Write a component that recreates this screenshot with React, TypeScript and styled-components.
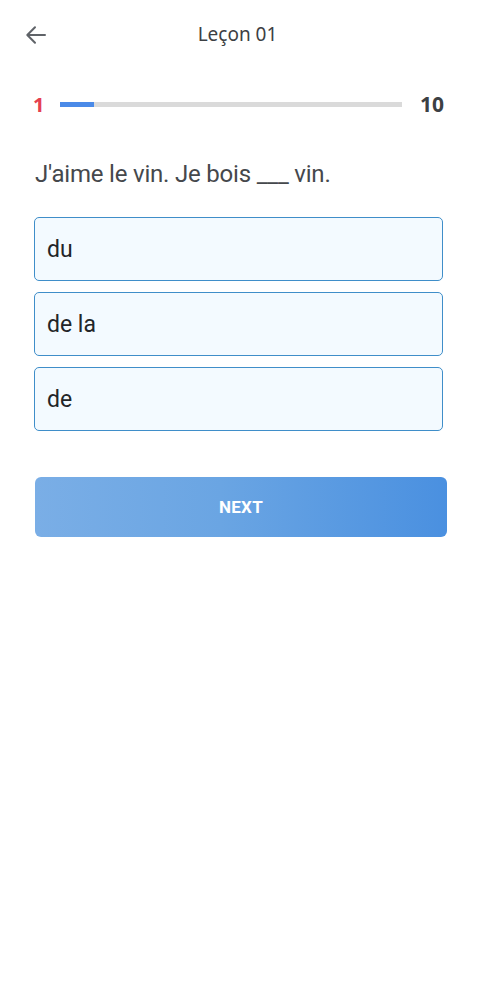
import React, { useState } from "react";
import styled, { createGlobalStyle } from "styled-components";

const GlobalStyle = createGlobalStyle`
  html, body {
    margin: 0;
    padding: 0;
    background: #ffffff;
  }
  body {
    font-family: Roboto, "Noto Sans", "Liberation Sans", sans-serif;
  }
`;

const Screen = styled.div`
  width: 477px;
  min-height: 1000px;
  background: #fff;
  box-sizing: border-box;
`;

const TopBar = styled.header`
  height: 70px;
  display: grid;
  grid-template-columns: 70px 1fr 70px;
  align-items: center;
`;

const BackButton = styled.button`
  border: 0;
  background: none;
  padding: 0;
  margin-left: 23px;
  width: 26px;
  height: 26px;
  display: flex;
  align-items: center;
  justify-content: center;
  cursor: pointer;
  color: #5f6368;
`;

const Title = styled.h1`
  margin: 0 0 2px 0;
  text-align: center;
  font-family: "Noto Sans", sans-serif;
  font-size: 19px;
  font-weight: 400;
  color: #3c4043;
  padding-right: 2px;
`;

const ProgressRow = styled.div`
  display: flex;
  align-items: center;
  padding: 22px 33px 0 33px;
  height: 24px;
`;

const Step = styled.span<{ current?: boolean }>`
  font-family: "Noto Sans", sans-serif;
  font-size: ${(p) => (p.current ? "20px" : "21px")};
  font-weight: 700;
  color: ${(p) => (p.current ? "#e5404f" : "#3c4043")};
  width: ${(p) => (p.current ? "27px" : "auto")};
`;

const Track = styled.div`
  flex: 1;
  height: 5px;
  background: #dadada;
  margin-right: 18px;
`;

const Fill = styled.div`
  height: 100%;
  background: #4a8ae8;
`;

const Body = styled.main`
  padding: 0 34px;
`;

const Question = styled.p`
  margin: 44px 0 0 1px;
  font-size: 24px;
  line-height: 28px;
  color: #45484c;
  letter-spacing: -0.2px;
`;

const Options = styled.div`
  margin-top: 29px;
  display: flex;
  flex-direction: column;
  gap: 11px;
  width: 409px;
`;

const Option = styled.button<{ selected?: boolean }>`
  height: 64px;
  box-sizing: border-box;
  border: 1.5px solid ${(p) => (p.selected ? "#1a73e8" : "#3f8ec9")};
  border-radius: 5px;
  background: #f3faff;
  text-align: left;
  padding: 0 12px;
  font-family: Roboto, sans-serif;
  font-size: 23px;
  color: #222528;
  cursor: pointer;
`;

const NextButton = styled.button`
  margin-top: 46px;
  margin-left: 1px;
  width: 412px;
  height: 60px;
  border: 0;
  border-radius: 6px;
  background: linear-gradient(90deg, #7aaee6 0%, #6aa5e3 45%, #4a90e0 100%);
  color: #fff;
  font-family: Roboto, sans-serif;
  font-size: 17px;
  font-weight: 700;
  letter-spacing: 0.3px;
  cursor: pointer;
`;

const choices = ["du", "de la", "de"];

function BackArrow() {
  return (
    <svg width="24" height="24" viewBox="0 0 24 24" fill="none">
      <path
        d="M21 12H3.5M11 4.2L3.3 12l7.7 7.8"
        stroke="currentColor"
        strokeWidth="2"
        strokeLinecap="round"
        strokeLinejoin="round"
      />
    </svg>
  );
}

export default function App() {
  const [picked, setPicked] = useState<number | null>(null);
  const current = 1;
  const total = 10;

  return (
    <Screen>
      <GlobalStyle />
      <TopBar>
        <BackButton aria-label="Back">
          <BackArrow />
        </BackButton>
        <Title>Leçon 01</Title>
        <span />
      </TopBar>

      <ProgressRow>
        <Step current>{current}</Step>
        <Track>
          <Fill style={{ width: `${(current / total) * 100}%` }} />
        </Track>
        <Step>{total}</Step>
      </ProgressRow>

      <Body>
        <Question>J'aime le vin. Je bois ___ vin.</Question>
        <Options>
          {choices.map((c, i) => (
            <Option key={c} selected={picked === i} onClick={() => setPicked(i)}>
              {c}
            </Option>
          ))}
        </Options>
        <NextButton>NEXT</NextButton>
      </Body>
    </Screen>
  );
}
